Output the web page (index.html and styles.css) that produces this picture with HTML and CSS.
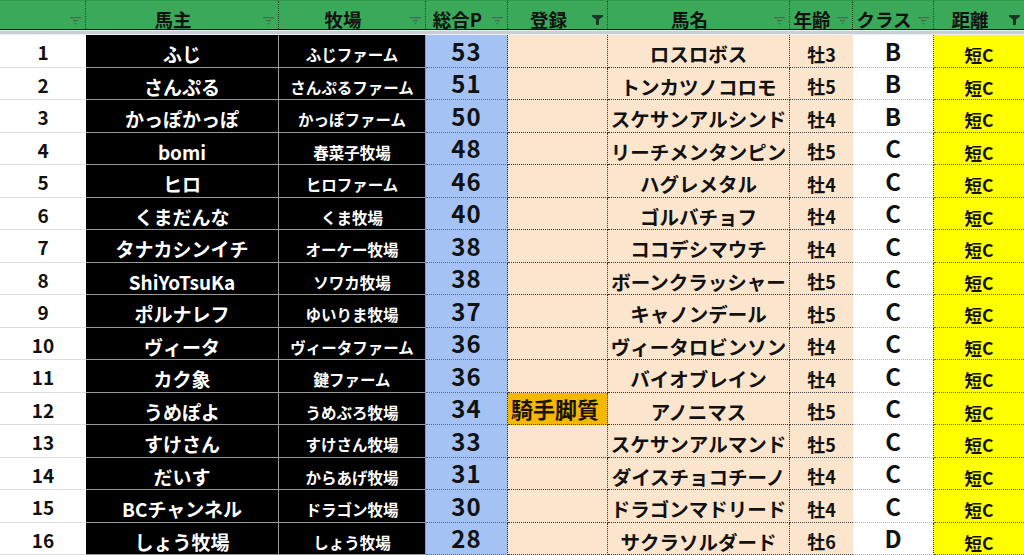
FILE: index.html
```html
<!DOCTYPE html>
<html lang="ja">
<head>
<meta charset="utf-8">
<title>馬一覧</title>
<link rel="stylesheet" href="styles.css">
</head>
<body>
<div class="sheet">
  <div class="head">
    <div class="hc c1"><span class="ht"></span><svg class="fi" width="11" height="8" viewBox="0 0 11 8"><rect x="0" y="0" width="11" height="1.3"/><rect x="3" y="3" width="5" height="1.3"/><rect x="4.6" y="6" width="1.8" height="1.3"/></svg></div>
    <div class="hc"><span class="ht">馬主</span><svg class="fi" width="11" height="8" viewBox="0 0 11 8"><rect x="0" y="0" width="11" height="1.3"/><rect x="3" y="3" width="5" height="1.3"/><rect x="4.6" y="6" width="1.8" height="1.3"/></svg></div>
    <div class="hc"><span class="ht">牧場</span><svg class="fi" width="11" height="8" viewBox="0 0 11 8"><rect x="0" y="0" width="11" height="1.3"/><rect x="3" y="3" width="5" height="1.3"/><rect x="4.6" y="6" width="1.8" height="1.3"/></svg></div>
    <div class="hc"><span class="ht">総合P</span><svg class="fi" width="11" height="8" viewBox="0 0 11 8"><rect x="0" y="0" width="11" height="1.3"/><rect x="3" y="3" width="5" height="1.3"/><rect x="4.6" y="6" width="1.8" height="1.3"/></svg></div>
    <div class="hc"><span class="ht">登録</span><svg class="ff" width="11" height="10" viewBox="0 0 11 10"><path d="M0 0H11V1.5L7 4.5V10H4V4.5L0 1.5Z"/></svg></div>
    <div class="hc"><span class="ht">馬名</span><svg class="fi" width="11" height="8" viewBox="0 0 11 8"><rect x="0" y="0" width="11" height="1.3"/><rect x="3" y="3" width="5" height="1.3"/><rect x="4.6" y="6" width="1.8" height="1.3"/></svg></div>
    <div class="hc"><span class="ht">年齢</span><svg class="fi" width="11" height="8" viewBox="0 0 11 8"><rect x="0" y="0" width="11" height="1.3"/><rect x="3" y="3" width="5" height="1.3"/><rect x="4.6" y="6" width="1.8" height="1.3"/></svg></div>
    <div class="hc"><span class="ht">クラス</span><svg class="fi" width="11" height="8" viewBox="0 0 11 8"><rect x="0" y="0" width="11" height="1.3"/><rect x="3" y="3" width="5" height="1.3"/><rect x="4.6" y="6" width="1.8" height="1.3"/></svg></div>
    <div class="hc last"><span class="ht">距離</span><svg class="ff" width="11" height="10" viewBox="0 0 11 10"><path d="M0 0H11V1.5L7 4.5V10H4V4.5L0 1.5Z"/></svg></div>
  </div>
  <div class="band"></div>
  <div class="body">
    <div class="c num">1</div><div class="c own">ふじ</div><div class="c farm">ふじファーム</div><div class="c pts">53</div><div class="c reg"></div><div class="c name">ロスロボス</div><div class="c age">牡3</div><div class="c cls">B</div><div class="c dist">短C</div>
    <div class="c num">2</div><div class="c own">さんぷる</div><div class="c farm">さんぷるファーム</div><div class="c pts">51</div><div class="c reg"></div><div class="c name">トンカツノコロモ</div><div class="c age">牡5</div><div class="c cls">B</div><div class="c dist">短C</div>
    <div class="c num">3</div><div class="c own">かっぽかっぽ</div><div class="c farm">かっぽファーム</div><div class="c pts">50</div><div class="c reg"></div><div class="c name">スケサンアルシンド</div><div class="c age">牡4</div><div class="c cls">B</div><div class="c dist">短C</div>
    <div class="c num">4</div><div class="c own">bomi</div><div class="c farm">春菜子牧場</div><div class="c pts">48</div><div class="c reg"></div><div class="c name">リーチメンタンピン</div><div class="c age">牡5</div><div class="c cls">C</div><div class="c dist">短C</div>
    <div class="c num">5</div><div class="c own">ヒロ</div><div class="c farm">ヒロファーム</div><div class="c pts">46</div><div class="c reg"></div><div class="c name">ハグレメタル</div><div class="c age">牡4</div><div class="c cls">C</div><div class="c dist">短C</div>
    <div class="c num">6</div><div class="c own">くまだんな</div><div class="c farm">くま牧場</div><div class="c pts">40</div><div class="c reg"></div><div class="c name">ゴルバチョフ</div><div class="c age">牡4</div><div class="c cls">C</div><div class="c dist">短C</div>
    <div class="c num">7</div><div class="c own">タナカシンイチ</div><div class="c farm">オーケー牧場</div><div class="c pts">38</div><div class="c reg"></div><div class="c name">ココデシマウチ</div><div class="c age">牡4</div><div class="c cls">C</div><div class="c dist">短C</div>
    <div class="c num">8</div><div class="c own">ShiYoTsuKa</div><div class="c farm">ソワカ牧場</div><div class="c pts">38</div><div class="c reg"></div><div class="c name">ボーンクラッシャー</div><div class="c age">牡5</div><div class="c cls">C</div><div class="c dist">短C</div>
    <div class="c num">9</div><div class="c own">ポルナレフ</div><div class="c farm">ゆいりま牧場</div><div class="c pts">37</div><div class="c reg"></div><div class="c name">キャノンデール</div><div class="c age">牡5</div><div class="c cls">C</div><div class="c dist">短C</div>
    <div class="c num">10</div><div class="c own">ヴィータ</div><div class="c farm">ヴィータファーム</div><div class="c pts">36</div><div class="c reg"></div><div class="c name">ヴィータロビンソン</div><div class="c age">牡4</div><div class="c cls">C</div><div class="c dist">短C</div>
    <div class="c num">11</div><div class="c own">カク象</div><div class="c farm">鍵ファーム</div><div class="c pts">36</div><div class="c reg"></div><div class="c name">バイオブレイン</div><div class="c age">牡4</div><div class="c cls">C</div><div class="c dist">短C</div>
    <div class="c num">12</div><div class="c own">うめぽよ</div><div class="c farm">うめぶろ牧場</div><div class="c pts">34</div><div class="c reg hl">騎手脚質</div><div class="c name">アノニマス</div><div class="c age">牡5</div><div class="c cls">C</div><div class="c dist">短C</div>
    <div class="c num">13</div><div class="c own">すけさん</div><div class="c farm">すけさん牧場</div><div class="c pts">33</div><div class="c reg"></div><div class="c name">スケサンアルマンド</div><div class="c age">牡5</div><div class="c cls">C</div><div class="c dist">短C</div>
    <div class="c num">14</div><div class="c own">だいす</div><div class="c farm">からあげ牧場</div><div class="c pts">31</div><div class="c reg"></div><div class="c name">ダイスチョコチーノ</div><div class="c age">牡4</div><div class="c cls">C</div><div class="c dist">短C</div>
    <div class="c num">15</div><div class="c own">BCチャンネル</div><div class="c farm">ドラゴン牧場</div><div class="c pts">30</div><div class="c reg"></div><div class="c name">ドラゴンマドリード</div><div class="c age">牡4</div><div class="c cls">C</div><div class="c dist">短C</div>
    <div class="c num">16</div><div class="c own">しょう牧場</div><div class="c farm">しょう牧場</div><div class="c pts">28</div><div class="c reg"></div><div class="c name">サクラソルダード</div><div class="c age">牡6</div><div class="c cls">D</div><div class="c dist">短C</div>
  </div>
</div>
</body>
</html>
```
FILE: styles.css
```css
* { box-sizing: border-box; }
html, body { margin: 0; padding: 0; background: #fff; }
body {
  font-family: "Noto Sans CJK JP", "Noto Sans", sans-serif;
  font-weight: 700;
  color: #111;
  overflow: hidden;
  height: 555px;
}
.sheet { width: 1024px; }
.head, .body {
  display: grid;
  grid-template-columns: 86px 193px 147px 82px 100px 182px 63px 81px 90px;
}
.head {
  height: 30px;
  background: #3aaa5a;
  border-top: 1px solid #2f9a4c;
  border-bottom: 1px solid #111;
}
.hc {
  display: flex;
  align-items: center;
  padding-top: 7px;
  border-right: 1px dotted #1d3a26;
  font-size: 18.5px;
  line-height: 20px;
  color: #111;
}
.hc.last { border-right: none; }
.ht { flex: 1; text-align: center; }
.fi { fill: #4a6a55; margin: 5px 4px 0 3px; flex: none; }
.ff { fill: #1d3524; margin: 3px 4px 0 3px; flex: none; }
.band {
  height: 5px;
  border-top: 1px solid #e9ecef;
  background: #c9cdd4;
  border-bottom: 1px solid #eef0f2;
}
.body { grid-auto-rows: 32.5px; }
.c {
  display: flex;
  align-items: center;
  justify-content: center;
  white-space: nowrap;
  line-height: 1.1;
  padding-top: 5px;
}
.num {
  font-size: 19px;
  background: #fff;
  border-bottom: 1px solid #dedede;
  padding-top: 4px;
}
.own, .farm {
  background: #000;
  color: #fff;
  border-right: 1px solid #9a9a9a;
  border-bottom: 1px solid #9a9a9a;
}
.own { font-size: 19px; padding-top: 8px; }
.farm { font-size: 15.5px; padding-top: 8px; }
.pts {
  background: #a4c2f4;
  font-size: 24px;
  letter-spacing: 1px;
  padding-top: 0;
  border-bottom: 1px dotted #5a6a80;
  border-right: 1px dotted #333;
}
.reg {
  background: #fce5cd;
  border-bottom: 1px dotted #333;
  border-right: 1px dotted #333;
  font-size: 22px;
  justify-content: flex-start;
  padding-left: 3px;
  padding-top: 0;
}
.reg.hl { background: #f5b800; color: #1a1300; }
.name {
  background: #fce5cd;
  font-size: 19.5px;
  padding-top: 6px;
  border-bottom: 1px dotted #333;
  border-right: 1px dotted #333;
}
.age {
  background: #fce5cd;
  font-size: 18px;
  border-bottom: 1px dotted #444;
  padding-top: 8px;
}
.cls {
  background: #fff;
  font-size: 24px;
  padding-top: 0;
  border-bottom: 1px dotted #b0b0b0;
  border-right: 1px dotted #333;
}
.dist {
  background: #ffff00;
  font-size: 17.5px;
  padding-top: 8px;
  border-bottom: 1px dotted #555;
}
```
